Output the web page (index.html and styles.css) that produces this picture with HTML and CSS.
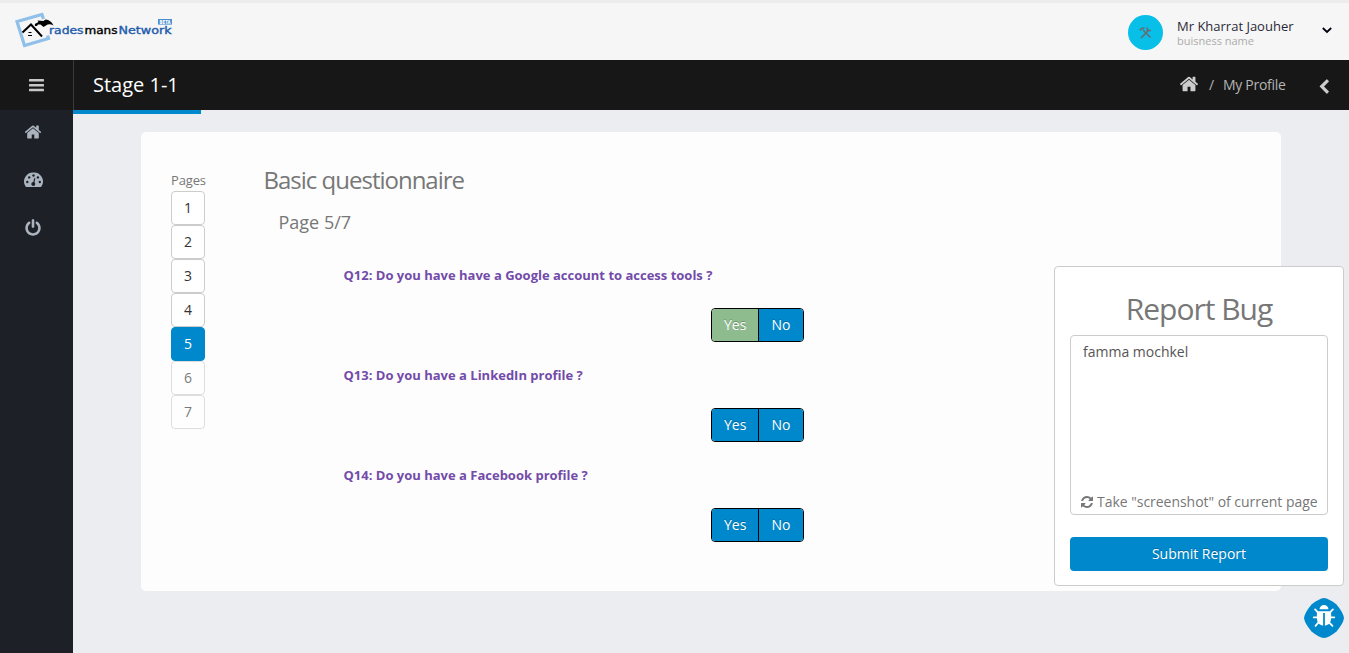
FILE: index.html
```
<!DOCTYPE html>
<html lang="en">
<head>
<meta charset="utf-8">
<title>Stage 1-1</title>
<link rel="stylesheet" href="styles.css">
</head>
<body>
<svg class="defs" width="0" height="0">
  <symbol id="home" viewBox="0 0 1792 1792"><path d="M1472 992v480q0 26-19 45t-45 19h-384v-384h-256v384h-384q-26 0-45-19t-19-45v-480q0-1 .5-3t.5-3l575-474 575 474q1 2 1 6zm223-69l-62 74q-8 9-21 11h-3q-13 0-21-7l-692-577-692 577q-12 8-24 7-13-2-21-11l-62-74q-8-10-7-23.500t11-21.500l719-599q32-26 76-26t76 26l244 204v-195q0-14 9-23t23-9h192q14 0 23 9t9 23v408l219 182q10 8 11 21.500t-7 23.500z"/></symbol>
</svg>
<header class="topbar">
  <svg class="logo" width="160" height="38" viewBox="0 0 160 38">
    <path d="M28.500 8L27 3.500L2 10.500L9.500 34.500L33.500 27.500L32.500 24.500" fill="none" stroke="#90c0ea" stroke-width="3.200"/>
    <path d="M7.500 21.500L16 13.500L27 25.500" fill="none" stroke="#000" stroke-width="2"/>
    <path d="M20 15L19.800 13L23.500 11L22.500 9.500L28.500 10L30.500 8.500Q36 9 38.500 14.500Q34 12 31 14.500L28.500 16L25.500 13.500L23 13.500L22 15z" fill="#000"/>
    <path d="M13.500 21.500h3M13 24.500h4" stroke="#000" stroke-width="1"/>
    <g class="logo-text" fill="#235cad" stroke="#235cad">
      <text x="34" y="23" textLength="34.500" lengthAdjust="spacingAndGlyphs">rades</text>
      <text x="69.500" y="23" textLength="33" lengthAdjust="spacingAndGlyphs" fill="#000" stroke="#000">mans</text>
      <text x="103.500" y="23" textLength="53" lengthAdjust="spacingAndGlyphs">Network</text>
    </g>
    <rect x="143" y="8" width="14" height="5.600" fill="#4a8fd0"/>
    <text x="144.500" y="12.800" class="logo-beta" textLength="11" lengthAdjust="spacingAndGlyphs">BETA</text>
  </svg>
  <div class="user">
    <span class="avatar">
      <svg width="13" height="13" viewBox="0 0 13 13" fill="none" stroke="#656c73"><path d="M2 12L9.500 4.500M4 4L11.500 11.500" stroke-width="1.600"/><path d="M.8 4.300L2.500 2.500L5.500 2.200M8.300 1.500L8.500 4.500L12 4.500" stroke-width="1.700"/></svg>
    </span>
    <span class="who"><span class="name">Mr Kharrat Jaouher</span><span class="role">buisness name</span></span>
    <svg class="caret" width="10" height="7" viewBox="0 0 10 7"><path d="M.8 1L5 5L9.200 1" fill="none" stroke="#000011" stroke-width="1.800"/></svg>
  </div>
</header>
<div class="titlebar">
  <div class="menu"><svg width="15" height="13" viewBox="0 0 15 13" fill="#c8c8c8"><rect width="15" height="2.600" rx=".6" y="0"/><rect width="15" height="2.600" rx=".6" y="4.900"/><rect width="15" height="2.600" rx=".6" y="9.700"/></svg></div>
  <h2 class="title">Stage 1-1</h2>
  <div class="crumbs">
    <svg class="crumb-home" width="20" height="20" fill="#ccc"><use href="#home"/></svg>
    <span class="slash">/</span><span class="crumb">My Profile</span>
    <svg class="back" width="16" height="16" viewBox="0 0 1792 1792" fill="#ccc"><path d="M1427 301l-531 531 531 531q19 19 19 45t-19 45l-166 166q-19 19-45 19t-45-19l-742-742q-19-19-19-45t19-45l742-742q19-19 45-19t45 19l166 166q19 19 19 45t-19 45z"/></svg>
  </div>
</div>
<div class="body">
  <nav class="sidebar">
    <svg width="18" height="18"><use href="#home"/></svg>
    <svg width="19" height="18" viewBox="0 0 19 18"><path fill-rule="evenodd" d="M9.500 1.500A9 9 0 0 0 1.300 15Q1.700 16 2.500 16H16.500Q17.300 16 17.700 15A9 9 0 0 0 9.500 1.500z"/><g fill="#1d2127"><circle cx="3.300" cy="11" r="1.200"/><circle cx="5.200" cy="6.400" r="1.200"/><circle cx="9.500" cy="4.500" r="1.200"/><circle cx="13.900" cy="6.400" r="1.200"/><circle cx="15.800" cy="11" r="1.200"/><circle cx="9.300" cy="13" r="2"/><path d="M10.300 7L11.400 7.200L10 13H8.800z"/></g></svg>
    <svg width="18" height="18" viewBox="0 0 1792 1792"><path d="M1664 896q0 156-61 298t-164 245-245 164-298 61-298-61-245-164-164-245-61-298q0-182 80.500-343t226.500-270q43-32 95.500-25t83.500 50q32 42 24.500 94.500t-49.500 84.500q-98 74-151.500 181t-53.500 228q0 104 40.500 198.500t109.500 163.500 163.500 109.500 198.500 40.500 198.500-40.500 163.500-109.500 109.500-163.500 40.500-198.500q0-121-53.500-228t-151.500-181q-42-32-49.500-84.500t24.500-94.500q31-43 84-50t95 25q146 109 226.500 270t80.500 343zm-640-768v640q0 52-38 90t-90 38-90-38-38-90v-640q0-52 38-90t90-38 90 38 38 90z"/></svg>
  </nav>
  <main class="content">
    <div class="progress"></div>
    <section class="card">
      <div class="pages">
        <span class="pages-label">Pages</span>
        <button class="page">1</button><button class="page">2</button><button class="page">3</button><button class="page">4</button><button class="page active">5</button><button class="page off">6</button><button class="page off">7</button>
      </div>
      <div class="form">
        <h2 class="heading">Basic questionnaire</h2>
        <h4 class="subheading">Page 5/7</h4>
        <div class="question"><p>Q12: Do you have have a Google account to access tools ?</p><div class="choice"><button class="yes chosen">Yes</button><button>No</button></div></div>
        <div class="question"><p>Q13: Do you have a LinkedIn profile ?</p><div class="choice"><button class="yes">Yes</button><button>No</button></div></div>
        <div class="question"><p>Q14: Do you have a Facebook profile ?</p><div class="choice"><button class="yes">Yes</button><button>No</button></div></div>
      </div>
    </section>
  </main>
</div>
<aside class="report">
  <h1 class="report-title">Report Bug</h1>
  <div class="field">
    <span class="message">famma mochkel</span>
    <span class="shot"><svg width="14" height="14" viewBox="0 0 1792 1792"><path d="M1639 1056q0 5-1 7-64 268-268 434.500t-478 166.500q-146 0-282.500-55t-243.500-157l-129 129q-19 19-45 19t-45-19-19-45v-448q0-26 19-45t45-19h448q26 0 45 19t19 45-19 45l-137 137q71 66 161 102t187 36q134 0 250-65t186-179q11-17 53-117 8-23 30-23h192q13 0 22.500 9.500t9.500 22.500zm25-800v448q0 26-19 45t-45 19h-448q-26 0-45-19t-19-45 19-45l138-138q-148-137-349-137-134 0-250 65t-186 179q-11 17-53 117-8 23-30 23h-199q-13 0-22.500-9.500t-9.500-22.500v-7q65-268 270-434.500t480-166.500q146 0 284 55.500t245 156.500l130-129q19-19 45-19t45 19 19 45z"/></svg><span>Take "screenshot" of current page</span></span>
  </div>
  <button class="submit">Submit Report</button>
</aside>
<svg class="bug" width="40" height="40" viewBox="0 0 40 40">
  <path d="M20 0Q25 .5 32.500 6.500Q39.500 15 40 20Q39.500 25 32.500 33.500Q25 39.500 20 40Q15 39.500 7.500 33.500Q.5 25 0 20Q.5 15 7.500 6.500Q15 .5 20 0z" fill="#0088cc"/>
  <svg x="7.500" y="6" width="25" height="25" viewBox="0 0 1792 1792" fill="#fff"><path d="M1696 960q0 26-19 45t-45 19h-224q0 171-67 290l208 209q19 19 19 45t-19 45q-18 19-45 19t-45-19l-198-197q-5 5-15 13t-42 28.500-65 36.500-82 29-97 13v-896h-128v896q-51 0-101.500-13.500t-87-33-66-39-43.500-32.500l-15-14-183 207q-20 21-48 21-24 0-43-16-19-18-20.500-44.500t15.500-46.500l202-227q-58-114-58-274h-224q-26 0-45-19t-19-45 19-45 45-19h224v-294l-173-173q-19-19-19-45t19-45 45-19 45 19l173 173h844l173-173q19-19 45-19t45 19 19 45-19 45l-173 173v294h224q26 0 45 19t19 45zm-480-576h-640q0-133 93.500-226.500t226.500-93.500 226.500 93.500 93.500 226.500z"/></svg>
</svg>
</body>
</html>
```
FILE: styles.css
```
* { box-sizing: border-box; }
body { margin: 0; height: 653px; overflow: hidden; display: flex; flex-direction: column; background: #ecedf0; font-family: "Open Sans", sans-serif; font-size: 14px; line-height: 22px; color: #777; }
h1, h2, h4, p { margin: 0; font-weight: 400; }
button { font: inherit; padding: 0; margin: 0; }
svg { display: block; flex: none; }
.defs { position: absolute; }
.topbar { flex: none; height: 60px; border-top: 3px solid #ececec; background: #f6f6f6; display: flex; justify-content: space-between; padding: 8px 17px 0 15px; }
.logo-text { font: 400 11px "DejaVu Sans", sans-serif; stroke-width: .4px; }
.logo-beta { font: 700 5.500px "DejaVu Sans", sans-serif; fill: #fff; }
.user { display: flex; height: 44px; padding-top: 4px; align-items: flex-start; }
.avatar { width: 35px; height: 35px; border-radius: 50%; background: #08bfe8; display: flex; align-items: center; justify-content: center; }
.who { display: flex; flex-direction: column; width: 145px; margin-left: 14px; padding-top: 3px; }
.name { font-size: 13px; line-height: 17px; color: #000011; opacity: .85; }
.role { font-size: 11px; line-height: 12px; color: #acacac; }
.caret { margin-top: 12px; }
.titlebar { flex: none; height: 50px; background: #171717; display: flex; align-items: center; }
.menu { width: 74px; height: 50px; border-right: 1px solid #3a3a3a; display: flex; align-items: center; justify-content: center; }
.title { margin-left: 19px; font-size: 20px; color: #fff; }
.crumbs { margin-left: auto; display: flex; align-items: center; padding-right: 17px; color: #b4b4b4; }
.crumb-home { margin-bottom: 2px; }
.slash { margin-left: 10px; width: 14px; }
.crumb { width: 93px; letter-spacing: -.3px; }
.back { margin-top: 3px; }
.body { flex: 1; display: flex; }
.sidebar { width: 73px; background: #1d2127; fill: #abb4be; display: flex; flex-direction: column; align-items: center; padding: 13px 7px 0 0; gap: 30px; }
.content { flex: 1; }
.progress { width: 128px; height: 4px; background: #0088cc; }
.card { margin: 18px 68px 0; height: 459px; border-radius: 5px; background: #fdfdfd; display: flex; padding: 36px 30px 0; }
.pages { width: 92.500px; padding-top: 1px; display: flex; flex-direction: column; }
.pages-label { font-size: 13px; height: 22px; letter-spacing: -.15px; }
.page { width: 34px; height: 34px; border: 1px solid #ccc; border-radius: 4px; background: #fff; color: #333; }
.page.active { background: #0088cc; border-color: #0088cc; color: #fff; }
.page.off { opacity: .65; }
.heading { font-size: 24px; line-height: 24px; letter-spacing: -1px; }
.subheading { font-size: 18px; line-height: 24px; margin: 18px 0 30px 15px; }
.question { height: 100px; padding-left: 80px; }
.question p { font-size: 13px; font-weight: 700; color: #734ba9; }
.choice { display: flex; margin: 22px 0 0 367.500px; width: 92.500px; height: 34px; border: 1px solid #000; border-radius: 4px; overflow: hidden; }
.choice button { flex: 1; border: 0; background: #0088cc; color: #fff; text-shadow: 0 -1px 0 rgba(0, 0, 0, .25); }
.choice .yes { flex: 0 0 47.400px; border-right: 1px solid #000; }
.choice .chosen { background: #8fbc8f; }
.report { position: absolute; left: 1054px; top: 266px; width: 290px; height: 320px; border: 1px solid #ccc; border-radius: 4px; background: #fff; padding: 20px 15px 0; }
.report-title { height: 48px; line-height: 44px; font-size: 30px; letter-spacing: -1px; text-align: center; }
.field { height: 180px; border: 1px solid #ccc; border-radius: 4px; display: flex; flex-direction: column; justify-content: space-between; padding: 5px 9px 1px; }
.message { padding-left: 3px; color: #555; }
.shot { display: flex; align-items: center; gap: 3px; fill: #777; white-space: nowrap; letter-spacing: -.03px; }
.submit { display: block; width: 100%; height: 34px; margin-top: 22px; border: 0; border-radius: 4px; background: #0088cc; color: #fff; text-shadow: 0 -1px 0 rgba(0, 0, 0, .25); }
.bug { position: absolute; left: 1304px; top: 598px; }
```
